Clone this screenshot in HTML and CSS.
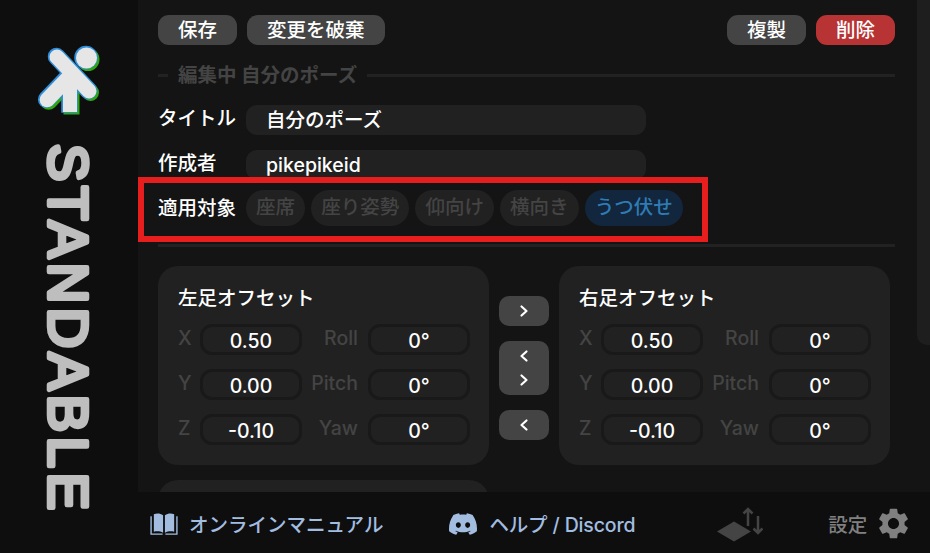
FILE: index.html
```html
<!DOCTYPE html>
<html lang="ja">
<head>
    <meta charset="UTF-8">
    <meta name="viewport" content="width=device-width, initial-scale=1.0">
    <title>Standable</title>
    <link rel="stylesheet" href="styles.css">
</head>
<body>
    <div class="app">
        <aside class="sidebar">
            <svg class="logo" width="138" height="130" viewBox="0 0 138 130">
                <defs>
                    <g id="pose">
                        <path d="M62.5 51.9L94.5 85.9A7.5 7.5 0 0 1 83.5 96.1L51.5 62.1A7.5 7.5 0 0 1 62.5 51.9Z"/>
                        <path d="M66.6 68.8L77.4 79.2L52.4 105.2A7.5 7.5 0 0 1 41.6 94.8Z"/>
                        <path d="M63 80H77V112H63Z"/>
                        <circle cx="86.5" cy="58" r="10.5"/>
                    </g>
                </defs>
                <use href="#pose" x="1.500" y="1.500" fill="#2fa80f" stroke="#2fa80f" stroke-width="2"/>
                <use href="#pose" x="-.5" y="-.5" fill="#2f8fdc" stroke="#2f8fdc" stroke-width="2.500"/>
                <use href="#pose" fill="#e6e6e6" stroke="none"/>
            </svg>
            <svg class="wordmark" width="138" height="380" viewBox="0 0 138 380">
                <text class="wordmark-text" transform="translate(49 6) rotate(90)" textLength="366" lengthAdjust="spacing">STANDABLE</text>
            </svg>
        </aside>

        <div class="main">
            <div class="content">
                <div class="editor">
                    <div class="toolbar">
                        <button class="btn">保存</button>
                        <button class="btn">変更を破棄</button>
                        <span class="spacer"></span>
                        <button class="btn">複製</button>
                        <button class="btn btn-danger">削除</button>
                    </div>

                    <div class="section-title"><span class="section-name">編集中 自分のポーズ</span></div>

                    <div class="field">
                        <label class="field-label">タイトル</label>
                        <div class="text-input">自分のポーズ</div>
                    </div>
                    <div class="field">
                        <label class="field-label">作成者</label>
                        <div class="text-input">pikepikeid</div>
                    </div>
                    <div class="field field-chips">
                        <label class="field-label">適用対象</label>
                        <div class="chips">
                            <span class="chip">座席</span>
                            <span class="chip">座り姿勢</span>
                            <span class="chip">仰向け</span>
                            <span class="chip">横向き</span>
                            <span class="chip chip-active">うつ伏せ</span>
                        </div>
                    </div>

                    <hr class="divider">

                    <div class="offsets">
                        <section class="card">
                            <h2 class="card-title">左足オフセット</h2>
                            <div class="offset-grid">
                                <span class="axis">X</span><div class="num">0.50</div><span class="axis axis-rot">Roll</span><div class="num">0°</div>
                                <span class="axis">Y</span><div class="num">0.00</div><span class="axis axis-rot">Pitch</span><div class="num">0°</div>
                                <span class="axis">Z</span><div class="num">-0.10</div><span class="axis axis-rot">Yaw</span><div class="num">0°</div>
                            </div>
                        </section>

                        <div class="copy-btns">
                            <button class="copy-btn"><svg width="12" height="14" viewBox="0 0 12 14"><path d="M3.500 2.500L8.500 7l-5 4.500"/></svg></button>
                            <button class="copy-btn copy-btn-both">
                                <svg width="12" height="14" viewBox="0 0 12 14"><path d="M8.500 2.500L3.500 7l5 4.500"/></svg>
                                <svg width="12" height="14" viewBox="0 0 12 14"><path d="M3.500 2.500L8.500 7l-5 4.500"/></svg>
                            </button>
                            <button class="copy-btn"><svg width="12" height="14" viewBox="0 0 12 14"><path d="M8.500 2.500L3.500 7l5 4.500"/></svg></button>
                        </div>

                        <section class="card">
                            <h2 class="card-title">右足オフセット</h2>
                            <div class="offset-grid">
                                <span class="axis">X</span><div class="num">0.50</div><span class="axis axis-rot">Roll</span><div class="num">0°</div>
                                <span class="axis">Y</span><div class="num">0.00</div><span class="axis axis-rot">Pitch</span><div class="num">0°</div>
                                <span class="axis">Z</span><div class="num">-0.10</div><span class="axis axis-rot">Yaw</span><div class="num">0°</div>
                            </div>
                        </section>
                    </div>

                    <div class="card card-next"></div>
                </div>
                <div class="scrollbar"><div class="scrollbar-thumb"></div></div>
                <div class="highlight"></div>
            </div>

            <footer class="footer">
                <a class="link link-manual">
                    <svg width="28" height="24" viewBox="0 0 30 26">
                        <path class="book-page" d="M4 2.500C7.500 1 11 1.500 14 3.500V22.500C11 21 7.500 20.500 4 21.500Z"/>
                        <path class="book-page" d="M26 2.500C22.500 1 19 1.500 16 3.500V22.500C19 21 22.500 20.500 26 21.500Z"/>
                        <path class="book-edge" d="M1 4.500V24H13.500M29 4.500V24H16.500"/>
                    </svg>
                    オンラインマニュアル
                </a>
                <a class="link link-help">
                    <svg width="28" height="28" viewBox="0 0 24 24"><path fill="#a2bde0" d="M20.317 4.3698a19.7913 19.7913 0 00-4.8851-1.5152.0741.0741 0 00-.0785.0371c-.211.3753-.4447.8648-.6083 1.2495-1.8447-.2762-3.68-.2762-5.4868 0-.1636-.3933-.4058-.8742-.6177-1.2495a.077.077 0 00-.0785-.037 19.7363 19.7363 0 00-4.8852 1.515.0699.0699 0 00-.0321.0277C.5334 9.0458-.319 13.5799.0992 18.0578a.0824.0824 0 00.0312.0561c2.0528 1.5076 4.0413 2.4228 5.9929 3.0294a.0777.0777 0 00.0842-.0276c.4616-.6304.8731-1.2952 1.226-1.9942a.076.076 0 00-.0416-.1057c-.6528-.2476-1.2743-.5495-1.8722-.8923a.077.077 0 01-.0076-.1277c.1258-.0943.2517-.1923.3718-.2914a.0743.0743 0 01.0776-.0105c3.9278 1.7933 8.18 1.7933 12.0614 0a.0739.0739 0 01.0785.0095c.1202.099.246.1981.3728.2924a.077.077 0 01-.0066.1276 12.2986 12.2986 0 01-1.873.8914.0766.0766 0 00-.0407.1067c.3604.698.7719 1.3628 1.225 1.9932a.076.076 0 00.0842.0286c1.961-.6067 3.9495-1.5219 6.0023-3.0294a.077.077 0 00.0313-.0552c.5004-5.177-.8382-9.6739-3.5485-13.6604a.061.061 0 00-.0312-.0286zM8.02 15.3312c-1.1825 0-2.1569-1.0857-2.1569-2.419 0-1.3332.9555-2.4189 2.157-2.4189 1.2108 0 2.1757 1.0952 2.1568 2.419 0 1.3332-.9555 2.4189-2.1569 2.4189zm7.9748 0c-1.1825 0-2.1569-1.0857-2.1569-2.419 0-1.3332.9554-2.4189 2.1569-2.4189 1.2108 0 2.1757 1.0952 2.1568 2.419 0 1.3332-.946 2.4189-2.1568 2.4189Z"/></svg>
                    <span class="help-text">ヘルプ / Discord</span>
                </a>
                <svg class="floor-icon" width="46" height="37" viewBox="0 0 46 37">
                    <path class="floor" d="M0 26.500L17 16.500 34 26.500 17 36.500Z"/>
                    <path class="floor-arrow" d="M31 21V4M26.500 8.500L31 4l4.500 4.500M41 11V28M36.500 23.500L41 28l4.500-4.500"/>
                </svg>
                <a class="link link-settings">
                    設定
                    <svg class="gear" width="37" height="37" viewBox="0 0 24 24"><path fill="#808080" d="M19.14 12.94c.04-.3.06-.61.06-.94 0-.32-.02-.64-.07-.94l2.03-1.58c.18-.14.23-.41.12-.61l-1.92-3.32c-.12-.22-.37-.29-.59-.22l-2.39.96c-.5-.38-1.03-.7-1.62-.94l-.36-2.54c-.04-.24-.24-.41-.48-.41h-3.84c-.24 0-.43.17-.47.41l-.36 2.54c-.59.24-1.13.57-1.62.94l-2.39-.96c-.22-.08-.47 0-.59.22L2.74 8.87c-.12.21-.08.47.12.61l2.03 1.58c-.05.3-.09.63-.09.94s.02.64.07.94l-2.03 1.58c-.18.14-.23.41-.12.61l1.92 3.32c.12.22.37.29.59.22l2.39-.96c.5.38 1.03.7 1.62.94l.36 2.54c.05.24.24.41.48.41h3.84c.24 0 .44-.17.47-.41l.36-2.54c.59-.24 1.13-.56 1.62-.94l2.39.96c.22.08.47 0 .59-.22l1.92-3.32c.12-.22.07-.47-.12-.61l-2.01-1.58zM12 15.6c-1.98 0-3.6-1.62-3.6-3.6s1.62-3.6 3.6-3.6 3.6 1.62 3.6 3.6-1.62 3.6-3.6 3.6z"/></svg>
                </a>
            </footer>
        </div>
    </div>
</body>
</html>
```

FILE: styles.css
```css
* {
    box-sizing: border-box;
}

html,
body {
    margin: 0;
    height: 100%;
    overflow: hidden;
}

body {
    font-family: Inter, "Noto Sans CJK JP", sans-serif;
    font-size: 19.5px;
    font-weight: 500;
    color: #fff;
    background-color: #0e0e0e;
}

.app {
    display: flex;
    height: 553px;
}

.sidebar {
    width: 138px;
    flex-shrink: 0;
    background-color: #0e0e0e;
}

.logo,
.wordmark {
    display: block;
}

.wordmark {
    margin-top: 8px;
}

.wordmark-text {
    font-family: "Liberation Sans", sans-serif;
    font-size: 56px;
    font-weight: 400;
    fill: #bebebe;
    stroke: #bebebe;
    stroke-width: 4.500px;
    stroke-linejoin: round;
}

.main {
    flex: 1;
    display: flex;
    flex-direction: column;
    min-width: 0;
}

.content {
    position: relative;
    flex: 1;
    display: flex;
    min-height: 0;
    overflow: hidden;
    background-color: #141414;
}

.editor {
    width: 779px;
    flex-shrink: 0;
    padding: 15px 0 0 20px;
}

.toolbar {
    display: flex;
    gap: 10px;
    width: 737px;
}

.spacer {
    flex: 1;
}

.btn {
    height: 30px;
    padding: 0 20px;
    border: none;
    border-radius: 11px;
    background-color: #444;
    color: #fff;
    font: inherit;
    line-height: 30px;
}

.btn-danger {
    background-color: #b83333;
}

.section-title {
    display: flex;
    align-items: center;
    gap: 10px;
    width: 737px;
    height: 30px;
    margin-top: 15px;
    color: #444;
    font-weight: 700;
}

.section-name {
    margin-top: -3px;
}

.section-title::before,
.section-title::after {
    content: "";
    height: 3px;
    background-color: #222;
}

.section-title::before {
    width: 10px;
}

.section-title::after {
    flex: 1;
}

.field {
    display: flex;
    align-items: center;
    margin-top: 15px;
}

.field-label {
    width: 88px;
    margin-top: -7px;
    flex-shrink: 0;
}

.text-input {
    width: 400px;
    height: 30px;
    padding-left: 20px;
    border-radius: 11px;
    background-color: #212121;
    line-height: 30px;
}

.field-chips {
    margin-top: 10px;
}

.field-chips .field-label {
    margin-top: -4px;
}

.chips {
    display: flex;
    gap: 6.200px;
}

.chip {
    height: 36px;
    padding: 0 10px;
    border-radius: 18px;
    background-color: #212121;
    color: #444;
    line-height: 35px;
}

.chip-active {
    background-color: #12263e;
    color: #2f7cb4;
}

.divider {
    width: 737px;
    height: 3px;
    margin: 18px 0 0;
    border: none;
    background-color: #222;
}

.offsets {
    display: flex;
    margin-top: 19px;
}

.card {
    width: 331px;
    height: 199px;
    padding: 20px 20px 0;
    border-radius: 20px;
    background-color: #212121;
}

.card-title {
    margin: 0;
    font-size: 19.5px;
    font-weight: 500;
    line-height: 24px;
}

.offset-grid {
    display: grid;
    grid-template-columns: 22px 102px 66px 102px;
    grid-auto-rows: 31px;
    row-gap: 14px;
    margin-top: 14px;
    align-items: center;
}

.axis {
    margin-top: -4px;
    color: #444;
    font-weight: 500;
}

.axis-rot {
    padding-right: 10px;
    text-align: right;
}

.num {
    height: 31px;
    border: 3px solid #191919;
    border-radius: 12px;
    text-align: center;
    line-height: 28px;
}

.copy-btns {
    width: 70px;
    display: flex;
    flex-direction: column;
    align-items: center;
    gap: 15px;
    padding-top: 30px;
}

.copy-btn {
    width: 50px;
    height: 30px;
    display: flex;
    flex-direction: column;
    align-items: center;
    justify-content: center;
    gap: 10px;
    padding: 0;
    border: none;
    border-radius: 10px;
    background-color: #444;
}

.copy-btn-both {
    height: 54px;
}

.copy-btn svg path {
    fill: none;
    stroke: #fff;
    stroke-width: 2.200px;
    stroke-linecap: round;
    stroke-linejoin: round;
}

.card-next {
    margin-top: 15px;
}

.scrollbar {
    flex: 1;
}

.scrollbar-thumb {
    height: 345px;
    border-radius: 0 0 0 10px;
    background-color: #1e1e1e;
}

.highlight {
    position: absolute;
    left: 0;
    top: 177px;
    width: 570px;
    height: 65px;
    border: 6px solid #e61e1e;
}

.footer {
    display: flex;
    align-items: center;
    height: 61px;
    padding: 2px 0 0 12px;
    background-color: #0e0e0e;
}

.link {
    display: flex;
    align-items: center;
    color: #a2bde0;
}

.link-manual {
    gap: 11px;
}

.link-help {
    gap: 12px;
    margin-left: 66px;
}

.help-text {
    letter-spacing: -0.150px;
}

.floor-icon {
    margin-left: 82px;
}

.link-settings {
    gap: 8px;
    margin-left: 65px;
    color: #808080;
}

.book-page {
    fill: #a2bde0;
}

.book-edge {
    fill: none;
    stroke: #a2bde0;
    stroke-width: 1.500px;
}

.floor {
    fill: #444;
}

.floor-arrow {
    fill: none;
    stroke: #444;
    stroke-width: 2.500px;
}
```
